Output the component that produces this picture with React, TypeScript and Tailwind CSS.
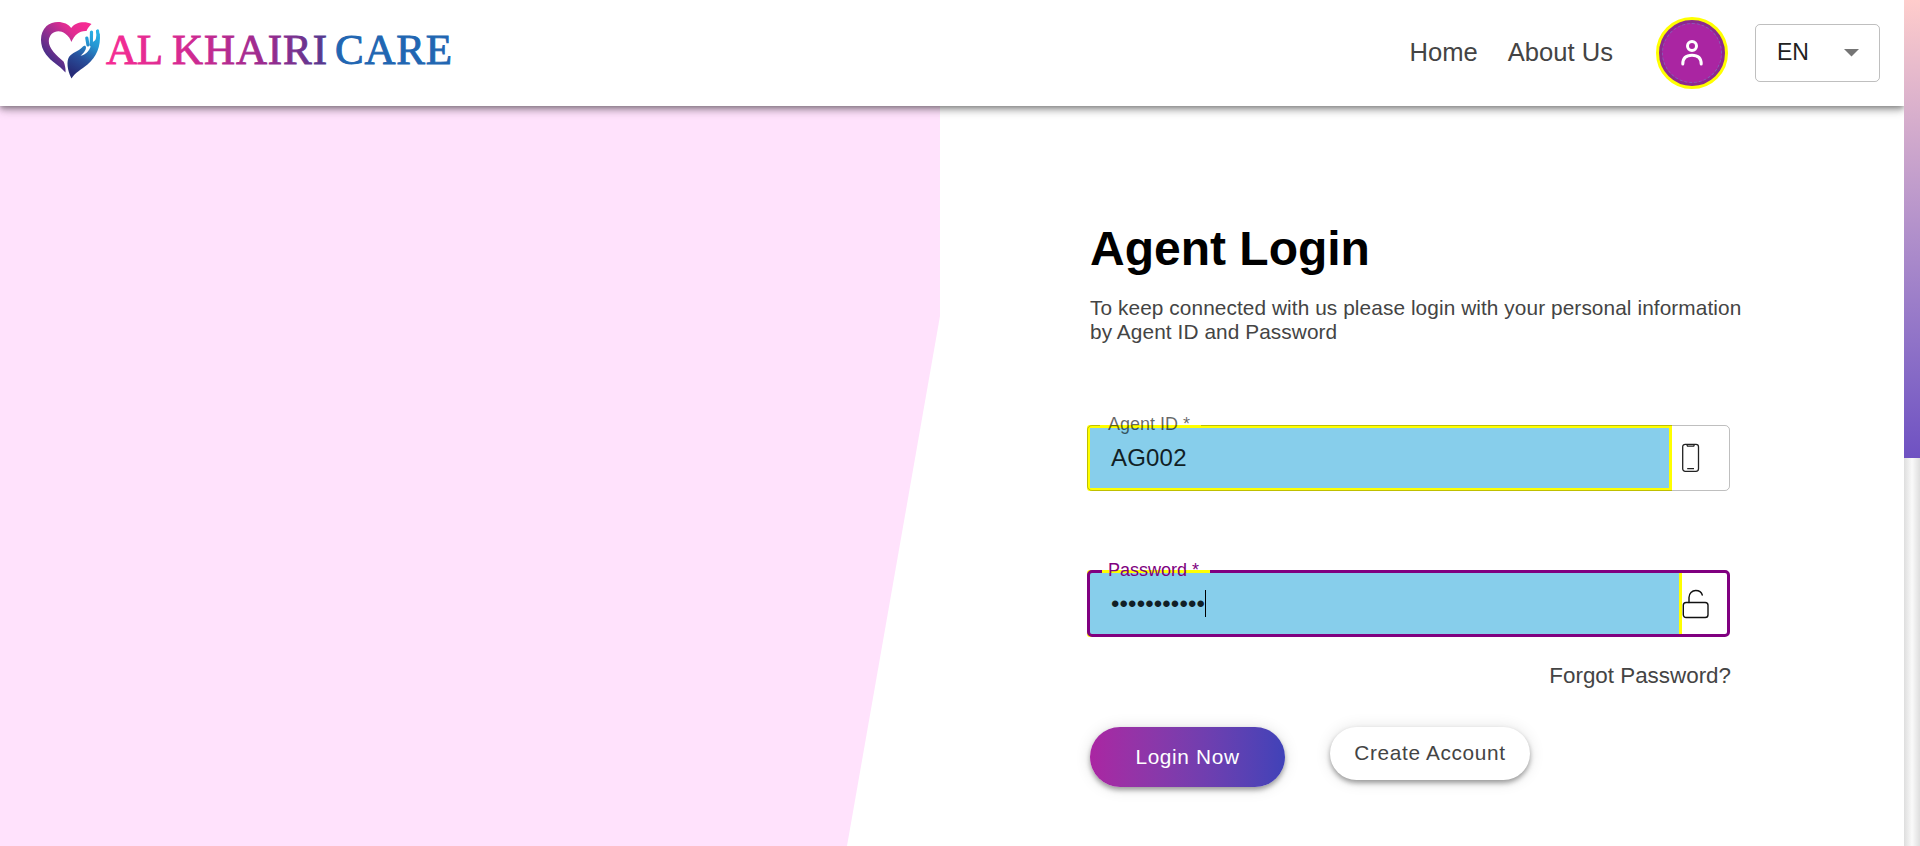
import React from "react";

function Logo() {
  return (
    <svg width="420" height="70" viewBox="36 16 420 70" className="block shrink-0" fontFamily="Liberation Serif, serif" fontSize="43">
      <defs>
        <linearGradient id="word" gradientUnits="userSpaceOnUse" x1="106" y1="0" x2="326" y2="0">
          <stop offset="0" stopColor="#f72c93" />
          <stop offset="0.35" stopColor="#d52a92" />
          <stop offset="0.75" stopColor="#962b8f" />
          <stop offset="1" stopColor="#54398f" />
        </linearGradient>
        <linearGradient id="heart" gradientUnits="userSpaceOnUse" x1="84" y1="22" x2="46" y2="60">
          <stop offset="0" stopColor="#f72c93" />
          <stop offset="0.3" stopColor="#e02c92" />
          <stop offset="0.65" stopColor="#8a2f90" />
          <stop offset="1" stopColor="#3a2f86" />
        </linearGradient>
        <linearGradient id="hand" gradientUnits="userSpaceOnUse" x1="96" y1="30" x2="72" y2="72">
          <stop offset="0" stopColor="#28b4e8" />
          <stop offset="0.3" stopColor="#2596d2" />
          <stop offset="0.65" stopColor="#28509c" />
          <stop offset="1" stopColor="#262c78" />
        </linearGradient>
      </defs>
      <path
        fill="url(#heart)"
        d="M91.500 24C85 20.500 75 22 71.200 28C67 21.500 54 19.500 46.500 26C39 33 39.500 46 46 54.500C51.500 62 59 65 65.500 72.500C66 69 64.800 64 63.500 61.500C57 56 48.500 48.500 48.800 41C49 32 58.500 28.500 65 33.500C68.500 36 70.500 39 71.300 42C74.500 35 79.500 30.500 86.500 31C87.500 28 89.500 26 91.500 24Z"
      />
      <path
        fill="url(#hand)"
        d="M99.800 33C101 47 96.500 56.500 87.500 64.500C81.500 69.500 75 72.500 71.500 78.500C67 70 66.500 61 69 57C72 52.500 78.500 51.500 82 47.500C84 45 86 45.500 86 47.500C86 50.500 83 53.500 80.500 55.800C86.500 54.500 90.500 50 91.500 43L95.500 40Z"
      />
      <path d="M86.800 38L88 45M91.500 32L91.300 45M97.500 31C98.500 35 97.500 41 94.500 48" fill="none" stroke="url(#hand)" strokeWidth="3.200" strokeLinecap="round" />
      <text x="106" y="64" fill="url(#word)" stroke="url(#word)" strokeWidth="0.9" textLength="57">AL</text>
      <text x="172" y="64" fill="url(#word)" stroke="url(#word)" strokeWidth="0.9" textLength="155">KHAIRI</text>
      <text x="335" y="64" fill="#2166b2" stroke="#2166b2" strokeWidth="0.9" textLength="117">CARE</text>
    </svg>
  );
}

function Header() {
  return (
    <header className="relative z-10 flex h-[106px] items-start bg-white shadow-[0_2px_4px_-1px_rgba(0,0,0,0.2),0_4px_5px_rgba(0,0,0,0.14),0_1px_10px_rgba(0,0,0,0.12),0_4px_10px_rgba(0,0,0,0.2)]">
      <div className="pt-4 pl-9"><Logo /></div>
      <nav className="ml-auto flex gap-[30px] pt-9 text-[25.6px] leading-8 whitespace-nowrap text-[#444]">
        <a>Home</a>
        <a>About Us</a>
      </nav>
      <button className="mt-[17px] ml-[43px] grid size-[72px] shrink-0 place-items-center rounded-full border-3 border-[#ffff00] bg-[#8b298f]">
        <span className="grid size-[60px] place-items-center rounded-full border border-dashed border-[#8a5bb8] bg-[#aa25a2]">
          <svg width="24" height="28" viewBox="0 0 24 28" fill="none" stroke="white" strokeWidth="3" strokeLinecap="round">
            <circle cx="12" cy="7" r="4.5" />
            <path d="M2.8 25C2.8 19 6.5 16.3 12 16.3S21.2 19 21.2 25" />
          </svg>
        </span>
      </button>
      <div className="mt-6 mr-6 ml-[27px] flex h-[58px] w-[125px] shrink-0 items-center justify-between rounded-[5px] border border-black/25 pr-5 pl-[21px] text-[23px] text-[#212121]">
        <span className="relative -top-px">EN</span>
        <svg width="15" height="8" viewBox="0 0 15 8"><path d="M0 0h15L7.5 7.5z" fill="#757575" /></svg>
      </div>
    </header>
  );
}

function PhoneIcon() {
  return (
    <svg width="18" height="30" viewBox="0 0 18 30" fill="none" stroke="#222" strokeWidth="1.3">
      <rect x="0.7" y="1.3" width="15.800" height="27" rx="2.500" />
      <path d="M4.800 1.500L5.500 3.200H11.700L12.400 1.500M5.200 25.700h6.800" />
    </svg>
  );
}

function LockIcon() {
  return (
    <svg width="28" height="30" viewBox="0 0 28 30" fill="none" stroke="#111" strokeWidth="1.4" strokeLinecap="round">
      <rect x="1.300" y="13.500" width="24.700" height="15" rx="2.800" />
      <path d="M7 13.500V8.500C7 4.500 10 1.500 13.800 1.500C17 1.500 19.500 3.300 20.300 6" />
    </svg>
  );
}

export default function App() {
  return (
    <div className="flex h-[846px] w-[1920px] overflow-hidden bg-white font-['Liberation_Sans',Arial,sans-serif]">
      <div className="flex w-[1904px] shrink-0 flex-col">
        <Header />
        <main className="flex h-[740px]">
          <section className="w-[940px] shrink-0 bg-[#ffe2fc] [clip-path:polygon(0_0,100%_0,100%_210px,847px_100%,0_100%)]" />
          <form className="ml-[147px] w-[665px] pt-[115px]">
            <h1 className="pl-[3px] text-[48px] leading-[56px] font-bold text-black">Agent Login</h1>
            <p className="mt-[19px] pl-[3px] text-[20.8px] leading-6 tracking-[0.09px] whitespace-nowrap text-[#444]">
              To keep connected with us please login with your personal information
              <br />
              by Agent ID and Password
            </p>

            <div className="relative mt-[81px] flex h-[66px] w-[643px]">
              <div className="flex w-[585px] items-center rounded-l-[3px] border-3 border-[#ffff00] bg-[#87ceeb] pl-[21px] text-[24px] tracking-[0.2px] text-[#111f26]">
                AG002
              </div>
              <div className="flex items-center pl-2.5"><PhoneIcon /></div>
              <fieldset className="pointer-events-none absolute inset-x-0 -top-2.5 bottom-0 rounded-[5px] border border-black/25 pl-[12px]">
                <legend className="h-5 w-[101px] pl-2 text-[18px] leading-[18px] whitespace-nowrap text-black/60">Agent ID *</legend>
              </fieldset>
            </div>

            <div className="relative mt-[79px] flex h-[67px] w-[643px]">
              <div className="flex w-[595px] items-center rounded-l-[3px] border-3 border-[#ffff00] bg-[#87ceeb] pl-[21px] text-[#111f26]">
                <span className="text-[24px] tracking-[0.15px]">•••••••••••</span>
                <span className="h-[27px] w-px bg-black" />
              </div>
              <div className="flex items-center"><LockIcon /></div>
              <fieldset className="pointer-events-none absolute inset-x-0 -top-[9px] bottom-0 rounded-[5px] border-3 border-[#800080] pl-[12px]">
                <legend className="h-5 w-[108px] pl-[6px] text-[18px] leading-[18px] whitespace-nowrap text-[#800080]">Password *</legend>
              </fieldset>
            </div>

            <div className="mt-[25px] w-[644px] text-right text-[22.4px] leading-7 text-[#444]">Forgot Password?</div>

            <div className="mt-[37px] flex items-start gap-[45px] pl-[3px] text-[20.8px] tracking-[0.65px]">
              <button className="h-[60px] w-[195px] rounded-full bg-linear-to-r from-[#aa25a2] to-[#4042b8] text-white shadow-[0_3px_5px_rgba(0,0,0,0.35),0_1px_16px_rgba(0,0,0,0.12)]">Login Now</button>
              <button className="h-[53px] w-[200px] rounded-full bg-white pb-0.5 text-[#444] shadow-[0_3px_5px_rgba(0,0,0,0.35),0_1px_16px_rgba(0,0,0,0.12)]">Create Account</button>
            </div>
          </form>
        </main>
      </div>
      <aside className="relative z-20 w-4 bg-linear-to-r from-[#dedede] via-[#fafafa] to-[#dedede]">
        <div className="h-[458px] bg-linear-to-b from-[#ffcccb] to-[#6f51c2]" />
      </aside>
    </div>
  );
}
